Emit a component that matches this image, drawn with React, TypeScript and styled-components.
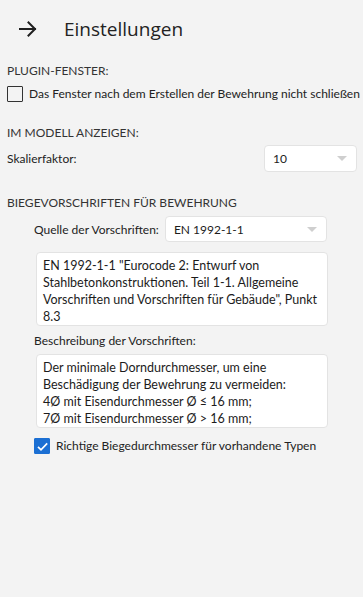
import styled, { createGlobalStyle } from "styled-components";

const GlobalStyle = createGlobalStyle`
  html, body {
    margin: 0;
    padding: 0;
    background: #f3f3f3;
  }
  body {
    font-family: Lato, "Open Sans", sans-serif;
    font-size: 12px;
    color: #2b2b2b;
  }
`;

const Page = styled.div`
  min-height: 597px;
  background: #f3f3f3;
  padding: 0 6px 0 7px;
  box-sizing: border-box;
`;

const Header = styled.header`
  display: flex;
  align-items: center;
  height: 58px;
  padding-left: 12px;
`;

const BackButton = styled.button`
  border: 0;
  background: none;
  padding: 0;
  width: 18px;
  height: 18px;
  display: flex;
  color: #1f1f1f;
  cursor: pointer;
`;

const Title = styled.h1`
  margin: 0 0 0 27px;
  font-family: "Open Sans", sans-serif;
  font-size: 19px;
  font-weight: 400;
  color: #222;
`;

const SectionLabel = styled.div<{ $top: number }>`
  margin-top: ${(p) => p.$top}px;
  line-height: 16px;
  color: #333;
  text-transform: uppercase;
`;

const CheckRow = styled.label<{ $indent?: number; $top: number }>`
  display: flex;
  align-items: center;
  gap: 6px;
  margin-top: ${(p) => p.$top}px;
  margin-left: ${(p) => p.$indent ?? 0}px;
  line-height: 16px;
  white-space: nowrap;
  color: #222;
`;

const Box = styled.span<{ $checked?: boolean }>`
  flex: none;
  width: 16px;
  height: 16px;
  box-sizing: border-box;
  border: 1px solid ${(p) => (p.$checked ? "#1b6fd3" : "#333")};
  background: ${(p) => (p.$checked ? "#1b6fd3" : "transparent")};
  border-radius: 1px;
  display: flex;
  align-items: center;
  justify-content: center;
`;

const FieldRow = styled.div<{ $indent?: number; $top: number; $right?: number }>`
  display: flex;
  align-items: center;
  gap: 6px;
  margin-top: ${(p) => p.$top}px;
  margin-left: ${(p) => p.$indent ?? 0}px;
  margin-right: ${(p) => p.$right ?? 0}px;
  white-space: nowrap;
`;

const FieldLabel = styled.span<{ $grow?: boolean }>`
  color: #222;
  flex: ${(p) => (p.$grow ? 1 : "none")};
`;

const Combo = styled.div<{ $width?: number; $height: number }>`
  flex: ${(p) => (p.$width ? "none" : 1)};
  width: ${(p) => (p.$width ? `${p.$width}px` : "auto")};
  height: ${(p) => p.$height}px;
  box-sizing: border-box;
  background: #fff;
  border: 1px solid #e3e3e3;
  border-radius: 4px;
  display: flex;
  align-items: center;
  justify-content: space-between;
  padding: 0 9px 0 8px;
  color: #1c1c1c;
`;

const Caret = styled.span`
  width: 0;
  height: 0;
  border-left: 5px solid transparent;
  border-right: 5px solid transparent;
  border-top: 5px solid #cfcfcf;
`;

const TextArea = styled.div<{ $top: number }>`
  margin: ${(p) => p.$top}px 29px 0 29px;
  height: 74px;
  box-sizing: border-box;
  background: #fff;
  border: 1px solid #e3e3e3;
  border-radius: 4px;
  padding: 4px 6px;
  font-size: 12.5px;
  line-height: 17px;
  color: #1c1c1c;
  white-space: nowrap;
  overflow: hidden;
`;

const SubLabel = styled.div<{ $top: number }>`
  margin: ${(p) => p.$top}px 0 0 27px;
  line-height: 16px;
  color: #222;
`;

export default function App() {
  return (
    <>
      <GlobalStyle />
      <Page>
        <Header>
          <BackButton aria-label="Zurück">
            <svg width="18" height="18" viewBox="0 0 18 18" fill="none">
              <path d="M1 9h15M9.5 2.5L16 9l-6.5 6.5" stroke="currentColor" strokeWidth="2" strokeLinecap="square" />
            </svg>
          </BackButton>
          <Title>Einstellungen</Title>
        </Header>

        <SectionLabel $top={5}>Plugin-Fenster:</SectionLabel>
        <CheckRow $top={7}>
          <Box />
          Das Fenster nach dem Erstellen der Bewehrung nicht schließen
        </CheckRow>

        <SectionLabel $top={23}>Im Modell anzeigen:</SectionLabel>
        <FieldRow $top={4}>
          <FieldLabel $grow>Skalierfaktor:</FieldLabel>
          <Combo $width={93} $height={27}>
            10
            <Caret />
          </Combo>
        </FieldRow>

        <SectionLabel $top={23}>Biegevorschriften für Bewehrung</SectionLabel>
        <FieldRow $indent={27} $right={30} $top={5}>
          <FieldLabel>Quelle der Vorschriften:</FieldLabel>
          <Combo $height={26}>
            EN 1992-1-1
            <Caret />
          </Combo>
        </FieldRow>
        <TextArea $top={10}>
          EN 1992-1-1 "Eurocode 2: Entwurf von
          <br />
          Stahlbetonkonstruktionen. Teil 1-1. Allgemeine
          <br />
          Vorschriften und Vorschriften für Gebäude", Punkt
          <br />
          8.3
        </TextArea>

        <SubLabel $top={7}>Beschreibung der Vorschriften:</SubLabel>
        <TextArea $top={5}>
          Der minimale Dorndurchmesser, um eine
          <br />
          Beschädigung der Bewehrung zu vermeiden:
          <br />
          4Ø mit Eisendurchmesser Ø ≤ 16 mm;
          <br />
          7Ø mit Eisendurchmesser Ø &gt; 16 mm;
        </TextArea>

        <CheckRow $indent={27} $top={10}>
          <Box $checked>
            <svg width="13" height="13" viewBox="0 0 13 13" fill="none">
              <path d="M2 6.8l3 3L11.2 3.4" stroke="#fff" strokeWidth="1.7" />
            </svg>
          </Box>
          Richtige Biegedurchmesser für vorhandene Typen
        </CheckRow>
      </Page>
    </>
  );
}
